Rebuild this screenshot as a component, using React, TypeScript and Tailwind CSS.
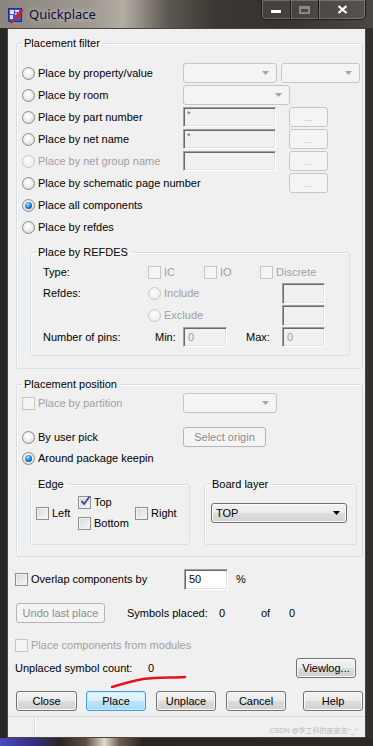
import React from 'react';
import clsx from 'clsx';

const ui = "font-['Liberation_Sans',Arial,sans-serif] text-[11px] leading-[13px]";
const dim = 'text-[#a0a0a0]';

const Radio: React.FC<{ checked?: boolean; disabled?: boolean }> = ({ checked, disabled }) => (
  <span
    className={clsx(
      'flex h-[13px] w-[13px] shrink-0 items-center justify-center rounded-full border',
      disabled
        ? 'border-[#c9c9c9] bg-[radial-gradient(circle_at_45%_40%,#fdfdfd,#e8e8e8)]'
        : 'border-[#8a8a8a] bg-[radial-gradient(circle_at_45%_40%,#ffffff_15%,#cfcfcf)]'
    )}
  >
    {checked && (
      <span className="h-[7px] w-[7px] rounded-full bg-[radial-gradient(circle_at_40%_35%,#a8e2ff,#1b74c9_55%,#0b3c78)]" />
    )}
  </span>
);

const Check: React.FC<{ checked?: boolean; disabled?: boolean }> = ({ checked, disabled }) => (
  <span
    className={clsx(
      'relative flex h-[13px] w-[13px] shrink-0 items-center justify-center border',
      disabled
        ? 'border-[#c6c6c6] bg-[#f4f4f4]'
        : 'border-[#8e8f8f] bg-[linear-gradient(135deg,#d6d6d6,#f9f9f9)] shadow-[inset_0_0_0_1px_#f2f2f2]'
    )}
  >
    {checked && (
      <svg width="11" height="11" viewBox="0 0 11 11" className="absolute -top-[2px] left-[1px]">
        <path d="M1.5 6 L4.2 9 L9.5 1.5" fill="none" stroke="#3a4f9e" strokeWidth="1.9" />
      </svg>
    )}
  </span>
);

const Combo: React.FC<{ w: string }> = ({ w }) => (
  <div className={clsx('flex h-[20px] shrink-0 items-center justify-end rounded-[3px] border border-[#c6c6c6] bg-[#f4f4f4] pr-[7px]', w)}>
    <svg width="7" height="4" viewBox="0 0 7 4">
      <path d="M0 0h7L3.5 4z" fill="#a4a4a4" />
    </svg>
  </div>
);

const Field: React.FC<{ w: string; h?: string; text?: string; white?: boolean; small?: boolean }> = ({
  w,
  h = 'h-[20px]',
  text,
  white,
  small,
}) => (
  <div
    className={clsx(
      'shrink-0 border border-t-[#a0a0a0] border-l-[#a0a0a0] border-b-white border-r-white shadow-[inset_1px_1px_0_#696969,inset_-1px_-1px_0_#e3e3e3]',
      white ? 'bg-white text-black' : 'bg-[#f0f0f0] text-[#9a9a9a]',
      small ? 'pl-[3px] pt-[2px] text-[9px] leading-[9px] text-[#666]' : 'flex items-center pl-[4px]',
      w,
      h
    )}
  >
    {text}
  </div>
);

const Dots: React.FC = () => (
  <div className="flex h-[20px] w-[39px] shrink-0 items-end justify-center rounded-[3px] border border-[#c6c6c6] bg-[#f4f4f4] pb-[3px] text-[9px] leading-[9px] text-[#a8a8a8]">
    ...
  </div>
);

const Btn: React.FC<{ children: React.ReactNode; className?: string; kind?: 'normal' | 'primary' | 'off' }> = ({
  children,
  className,
  kind = 'normal',
}) => (
  <div
    className={clsx(
      'flex h-[20px] shrink-0 items-center justify-center rounded-[3px] border',
      kind === 'normal' &&
        'border-[#707070] bg-[linear-gradient(#f2f2f2_0%,#ebebeb_50%,#dddddd_50%,#cfcfcf_100%)] shadow-[inset_0_0_0_1px_#fbfbfb] text-black',
      kind === 'primary' &&
        'border-[#3c9de1] bg-[linear-gradient(#e9f6fd_0%,#d8effc_50%,#bde5fc_50%,#a6dbf8_100%)] shadow-[inset_0_0_0_1px_#c9ecfd] text-black',
      kind === 'off' && 'border-[#b5b5b5] bg-[#f4f4f4] text-[#8d8d8d]',
      className
    )}
  >
    {children}
  </div>
);

const RadioLabel: React.FC<{ label: string; checked?: boolean; disabled?: boolean; w?: string }> = ({
  label,
  checked,
  disabled,
  w,
}) => (
  <div className={clsx('flex shrink-0 items-center gap-[3px]', w)}>
    <Radio checked={checked} disabled={disabled} />
    <span className={clsx('whitespace-nowrap', disabled && dim)}>{label}</span>
  </div>
);

const CheckLabel: React.FC<{ label: string; checked?: boolean; disabled?: boolean; w?: string }> = ({
  label,
  checked,
  disabled,
  w,
}) => (
  <div className={clsx('flex shrink-0 items-center gap-[3px]', w)}>
    <Check checked={checked} disabled={disabled} />
    <span className={clsx('whitespace-nowrap', disabled && dim)}>{label}</span>
  </div>
);

const group = 'rounded-[3px] border border-[#d5dfe5] shadow-[inset_1px_1px_0_#ffffff]';

export default function App() {
  return (
    <div
      className={clsx(
        'relative h-[746px] w-[373px] overflow-hidden bg-[linear-gradient(90deg,#2a2623,#3b3632_50%,#332f2b)]',
        ui
      )}
    >
      {/* Title bar */}
      <div className="flex h-[28px] items-start bg-[linear-gradient(90deg,#8a857f_0%,#9f9991_25%,#b3ada4_33%,#5e5852_45%,#3b3631_58%,#37322e_75%,#4c4742_100%)]">
        <svg width="16" height="16" viewBox="0 0 16 16" className="ml-[8px] mt-[8px] shrink-0">
          <rect x="0.5" y="0.5" width="13" height="13" fill="#3c55c9" stroke="#20308a" />
          <path d="M2 2h4v4H2zM7 2h4v2H7zM2 7h3v4H2zM7 5h2v2H7z" fill="#dfe5ff" />
          <path d="M2 15 L8 9 L7 7 L11 5 L14 1 L15.5 2.5 L13 6 L11 10 L9 10 L3.5 15.8 Z" fill="#e21b1b" />
        </svg>
        <div className="ml-[5px] mt-[6px] font-['Noto_Sans',sans-serif] text-[13px] leading-[16px] text-[#0d0d35] [text-shadow:0_0_6px_rgba(255,255,255,0.7)]">
          Quickplace
        </div>
        <div className="ml-auto mr-[7px] flex h-[20px] rounded-b-[5px] border border-t-0 border-[#1e1b19] bg-[rgba(255,255,255,0.07)] shadow-[inset_0_0_0_1px_rgba(255,255,255,0.22)]">
          <div className="flex w-[28px] items-end justify-center pb-[6px]">
            <div className="h-[3px] w-[10px] bg-white shadow-[0_0_1px_#333]" />
          </div>
          <div className="flex w-[28px] items-center justify-center border-l border-[#1e1b19] shadow-[inset_1px_0_0_rgba(255,255,255,0.22)]">
            <div className="h-[8px] w-[11px] border-[2px] border-t-[3px] border-[#8d8882]" />
          </div>
          <div className="flex w-[47px] items-center justify-center border-l border-[#1e1b19] shadow-[inset_1px_0_0_rgba(255,255,255,0.22)]">
            <svg width="11" height="9" viewBox="0 0 11 9">
              <path d="M1.5 1 L9.5 8 M9.5 1 L1.5 8" stroke="#ffffff" strokeWidth="2.3" />
            </svg>
          </div>
        </div>
      </div>

      {/* Client area */}
      <div className="ml-[7px] flex h-[710px] w-[359px] flex-col border border-[#4a4541] bg-[#f0f0f0] text-black">
        {/* Placement filter */}
        <fieldset className={clsx('ml-[8px] mt-[7px] w-[347px] pb-[12px]', group)}>
          <legend className="ml-[5px] px-[2px] leading-[14px]">Placement filter</legend>
          <div className="pl-[5px] pt-[12px]">
            <div className="flex h-[22px] items-center">
              <RadioLabel label="Place by property/value" w="w-[161px]" />
              <Combo w="w-[94px]" />
              <div className="ml-[4px]">
                <Combo w="w-[79px]" />
              </div>
            </div>
            <div className="flex h-[22px] items-center">
              <RadioLabel label="Place by room" w="w-[161px]" />
              <Combo w="w-[107px]" />
            </div>
            <div className="flex h-[22px] items-center">
              <RadioLabel label="Place by part number" w="w-[161px]" />
              <Field w="w-[93px]" text="*" small />
              <div className="ml-[13px]">
                <Dots />
              </div>
            </div>
            <div className="flex h-[22px] items-center">
              <RadioLabel label="Place by net name" w="w-[161px]" />
              <Field w="w-[93px]" text="*" small />
              <div className="ml-[13px]">
                <Dots />
              </div>
            </div>
            <div className="flex h-[22px] items-center">
              <RadioLabel label="Place by net group name" disabled w="w-[161px]" />
              <Field w="w-[93px]" />
              <div className="ml-[13px]">
                <Dots />
              </div>
            </div>
            <div className="flex h-[22px] items-center">
              <RadioLabel label="Place by schematic page number" w="w-[267px]" />
              <Dots />
            </div>
            <div className="flex h-[22px] items-center">
              <RadioLabel label="Place all components" checked />
            </div>
            <div className="flex h-[22px] items-center">
              <RadioLabel label="Place by refdes" />
            </div>

            {/* Place by REFDES */}
            <fieldset className={clsx('ml-[8px] mt-[7px] w-[320px] pb-[7px]', group)}>
              <legend className="ml-[5px] px-[2px] leading-[14px]">Place by REFDES</legend>
              <div className="pl-[12px] pt-[2px]">
                <div className="flex h-[22px] items-center">
                  <span className="w-[105px] shrink-0">Type:</span>
                  <CheckLabel label="IC" disabled w="w-[56px]" />
                  <CheckLabel label="IO" disabled w="w-[56px]" />
                  <CheckLabel label="Discrete" disabled />
                </div>
                <div className="flex h-[21px] items-center">
                  <span className="w-[105px] shrink-0">Refdes:</span>
                  <RadioLabel label="Include" disabled w="w-[134px]" />
                  <Field w="w-[43px]" h="h-[21px]" />
                </div>
                <div className="flex h-[22px] items-center">
                  <span className="w-[105px] shrink-0" />
                  <RadioLabel label="Exclude" disabled w="w-[134px]" />
                  <Field w="w-[43px]" h="h-[21px]" />
                </div>
                <div className="flex h-[22px] items-center">
                  <span className="w-[112px] shrink-0">Number of pins:</span>
                  <span className="w-[28px] shrink-0">Min:</span>
                  <Field w="w-[44px]" text="0" />
                  <span className="ml-[19px] w-[36px] shrink-0">Max:</span>
                  <Field w="w-[43px]" text="0" />
                </div>
              </div>
            </fieldset>
          </div>
        </fieldset>

        {/* Placement position */}
        <fieldset className={clsx('ml-[8px] mt-[8px] w-[347px] pb-[11px]', group)}>
          <legend className="ml-[5px] px-[2px] leading-[14px]">Placement position</legend>
          <div className="pt-[1px]">
            <div className="flex h-[22px] items-center pl-[5px]">
              <CheckLabel label="Place by partition" disabled w="w-[161px]" />
              <Combo w="w-[94px]" />
            </div>
            <div className="mt-[12px] flex h-[22px] items-center pl-[5px]">
              <RadioLabel label="By user pick" w="w-[161px]" />
              <Btn kind="off" className="h-[19px] w-[83px]">
                Select origin
              </Btn>
            </div>
            <div className="flex h-[20px] items-center pl-[5px]">
              <RadioLabel label="Around package keepin" checked />
            </div>

            <div className="mt-[9px] flex pl-[13px]">
              <fieldset className={clsx('w-[160px] pb-[10px]', group)}>
                <legend className="ml-[5px] px-[2px] leading-[14px]">Edge</legend>
                <div className="flex pl-[5px] pt-[1px]">
                  <div className="flex w-[42px] items-center">
                    <CheckLabel label="Left" />
                  </div>
                  <div className="w-[57px]">
                    <div className="flex h-[21px] items-center">
                      <CheckLabel label="Top" checked />
                    </div>
                    <div className="flex h-[21px] items-center">
                      <CheckLabel label="Bottom" />
                    </div>
                  </div>
                  <div className="flex items-center">
                    <CheckLabel label="Right" />
                  </div>
                </div>
              </fieldset>
              <fieldset className={clsx('ml-[14px] w-[153px]', group)}>
                <legend className="ml-[5px] px-[2px] leading-[14px]">Board layer</legend>
                <div className="pl-[6px] pt-[12px]">
                  <div className="flex h-[20px] w-[136px] items-center justify-between rounded-[3px] border border-[#707070] bg-[linear-gradient(#f2f2f2_0%,#ebebeb_50%,#dddddd_50%,#d3d3d3_100%)] pl-[4px] pr-[6px] shadow-[inset_0_0_0_1px_#fafafa]">
                    <span>TOP</span>
                    <svg width="7" height="4" viewBox="0 0 7 4">
                      <path d="M0 0h7L3.5 4z" fill="#000000" />
                    </svg>
                  </div>
                </div>
              </fieldset>
            </div>
          </div>
        </fieldset>

        {/* Bottom controls */}
        <div className="pl-[7px] pr-[9px]">
          <div className="mt-[11px] flex h-[22px] items-center">
            <CheckLabel label="Overlap components by" w="w-[169px]" />
            <Field w="w-[44px]" h="h-[21px]" text="50" white />
            <span className="ml-[8px]">%</span>
          </div>
          <div className="mt-[12px] flex h-[22px] items-center">
            <Btn kind="off" className="ml-[1px] w-[89px]">
              Undo last place
            </Btn>
            <span className="ml-[22px] w-[92px] shrink-0">Symbols placed:</span>
            <span className="w-[42px] shrink-0">0</span>
            <span className="w-[28px] shrink-0">of</span>
            <span>0</span>
          </div>
          <div className="mt-[10px] flex h-[22px] items-center">
            <CheckLabel label="Place components from modules" disabled />
          </div>
          <div className="mt-[1px] flex h-[22px] items-center">
            <span className="w-[133px] shrink-0">Unplaced symbol count:</span>
            <span>0</span>
            <Btn className="ml-auto h-[19px] w-[60px]">Viewlog...</Btn>
          </div>
          <div className="mt-[12px] flex h-[20px] items-center">
            <Btn className="ml-[1px] w-[61px]">Close</Btn>
            <Btn kind="primary" className="ml-[9px] w-[60px]">
              Place
            </Btn>
            <Btn className="ml-[10px] w-[60px]">Unplace</Btn>
            <Btn className="ml-[10px] w-[60px]">Cancel</Btn>
            <Btn className="ml-[17px] w-[60px]">Help</Btn>
          </div>
        </div>

        {/* Status bar */}
        <div className="mt-[5px] flex flex-1 border-t border-[#d9d9d9]">
          <div className="w-[27px] border-r border-[#d9d9d9] shadow-[1px_0_0_#ffffff]" />
          <div className="flex flex-1 items-end justify-end pb-[1px] pr-[7px] font-['Liberation_Sans','Noto_Sans_CJK_SC',sans-serif] text-[7px] leading-[10px] text-[#b8b8b8]">
            CSDN @学工科的皮皮志^_^
          </div>
        </div>
      </div>

      {/* Bottom frame */}
      <div className="h-[8px] bg-[linear-gradient(90deg,#4a48c8_0%,#34307a_9%,#2a2623_16%,#5a4e46_23%,#e8d8c8_28%,#6b5e55_32%,#2a2623_38%,#2c2825_100%)]" />

      {/* Red pen mark */}
      <svg width="373" height="746" className="pointer-events-none absolute left-0 top-0">
        <path d="M112 687 C122 684 132 681 143 679 C158 677 172 678 185 677" fill="none" stroke="#e4141a" strokeWidth="2.4" strokeLinecap="round" />
      </svg>
    </div>
  );
}
